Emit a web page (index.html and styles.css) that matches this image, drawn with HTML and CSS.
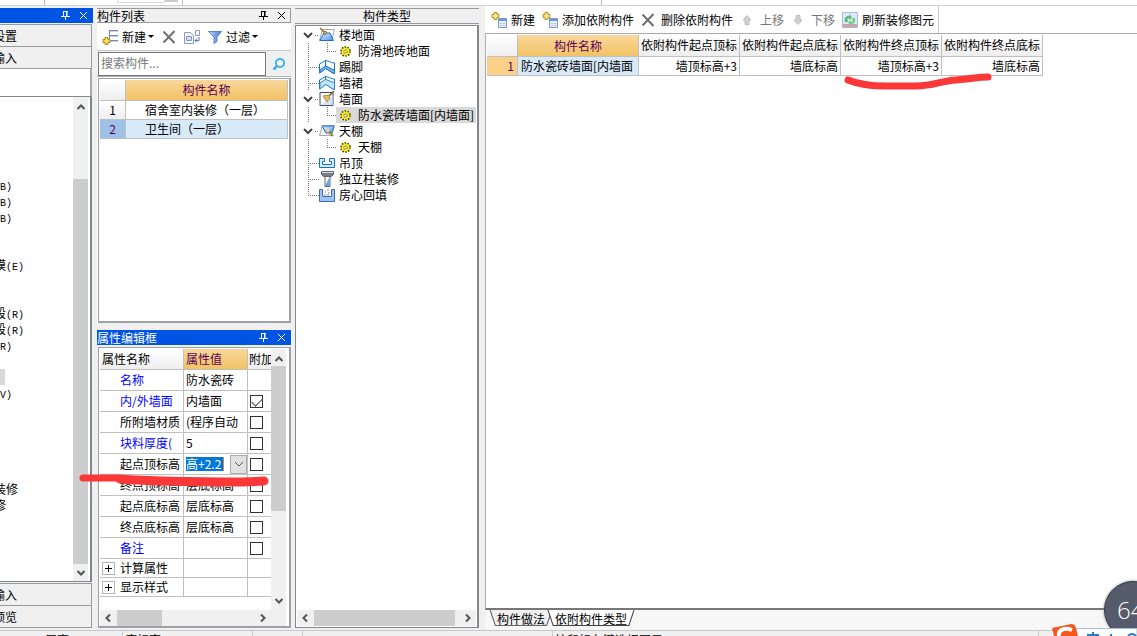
FILE: index.html
```html
<!DOCTYPE html>
<html lang="zh-CN">
<head>
<meta charset="utf-8">
<title>构件列表</title>
<link rel="stylesheet" href="styles.css">
</head>
<body>
<svg class="defs" aria-hidden="true">
  <defs>
    <linearGradient id="gFunnel" x1="0" x2="1"><stop offset="0" stop-color="#c4dafb"/><stop offset="1" stop-color="#3f74d6"/></linearGradient>
    <linearGradient id="gBlue" x1="0" x2="1" y1="0" y2="1"><stop offset="0" stop-color="#d9ecff"/><stop offset="1" stop-color="#4d97ea"/></linearGradient>
  </defs>
  <symbol id="pin" viewBox="0 0 9 9"><path d="M2.5 0v5M2 .5h5M6 0v5M5.500 0v5M0 5.500h9M4.500 6v3" fill="none" stroke="currentColor"/></symbol>
  <symbol id="close" viewBox="0 0 9 9"><path d="M1 1l7 7M8 1l-7 7" fill="none" stroke="currentColor"/></symbol>
  <symbol id="up" viewBox="0 0 10 10"><path d="M1.500 7L5 3.500L8.500 7" fill="none" stroke="#555" stroke-width="2"/></symbol>
  <symbol id="down" viewBox="0 0 10 10"><path d="M1.500 3L5 6.500L8.500 3" fill="none" stroke="#555" stroke-width="2"/></symbol>
  <symbol id="thindown" viewBox="0 0 10 10"><path d="M1 3L5 7L9 3" fill="none" stroke="#555"/></symbol>
  <symbol id="left" viewBox="0 0 10 10"><path d="M7 1.500L3.500 5L7 8.500" fill="none" stroke="#555" stroke-width="2"/></symbol>
  <symbol id="right" viewBox="0 0 10 10"><path d="M3 1.500L6.500 5L3 8.500" fill="none" stroke="#555" stroke-width="2"/></symbol>
  <symbol id="delete" viewBox="0 0 14 14"><path d="M1.500 1.500l11 11.500M12.500 1L1.500 12.500" fill="none" stroke="#707070" stroke-width="2"/></symbol>
  <symbol id="newitem" viewBox="0 0 16 16"><path d="M7 1.500h9M7 6.500h9M7 11.500h9M7.500 1v11" stroke="#7288b0" fill="none"/><path d="M8 2.500h8M8 7.500h8M8 12.500h8" stroke="#c6d3ea" fill="none"/><path d="M3 8.500h3v2h2v3h-2v2h-3v-2h-2v-3h2z" fill="#f6dc5a" stroke="#a98a21"/></symbol>
  <symbol id="newsheet" viewBox="0 0 16 16"><path d="M7.500 6.500h8v9h-8z" fill="#eaf2ff" stroke="#7d97cb"/><path d="M8 7h7v2h-7z" fill="#6f96dd"/><path d="M9 11.500h2M12 11.500h2M9 13.500h2M12 13.500h2" stroke="#a9bfe5"/><path d="M3 .5h3v2h2v3h-2v2h-3v-2h-2v-3h2z" fill="#f6e48a" stroke="#b0922a"/></symbol>
  <symbol id="copy" viewBox="0 0 16 16"><path d="M.5 3.500h6l3 3v8h-9z" fill="#f4f7fc" stroke="#8a9dc2"/><path d="M2.500 7.500h5v4h-5z" fill="#d7deec" stroke="#8797b5"/><path d="M11.500 1.500h4v5h-4z" fill="#f4f7fc" stroke="#8a9dc2"/><path d="M15 8v3.500h-4M13 9.500l-2 2l2 2" fill="none" stroke="#5373cc"/></symbol>
  <symbol id="filter" viewBox="0 0 14 14"><path d="M.5 1.500h13L9 7v4.500l-3 2V7z" fill="url(#gFunnel)" stroke="#5785d2"/></symbol>
  <symbol id="search" viewBox="0 0 14 14"><path d="M0 0h14v14H0z" fill="#e4f4fd"/><circle cx="8" cy="6" r="4" fill="#f6fcff" stroke="#4aa9e6" stroke-width="2"/><path d="M5 9L1.500 12.500" stroke="#4aa9e6" stroke-width="2.500"/></symbol>
  <symbol id="arrowup" viewBox="0 0 10 10"><path d="M5 .5L9 5H7v4.500H3V5H1z" fill="#d0d0d0" stroke="#bdbdbd"/></symbol>
  <symbol id="arrowdown" viewBox="0 0 10 10"><path d="M5 9.500L9 5H7V.5H3V5H1z" fill="#d0d0d0" stroke="#bdbdbd"/></symbol>
  <symbol id="refresh" viewBox="0 0 16 16"><path d="M.5 .5h15v15H.5z" fill="#dde9fb" stroke="#a6bbea"/><path d="M1 12h14v3H1z" fill="#cfa5a2"/><path d="M3 10c-1-4 1-6 4-6V2l3 3.500L7 8V6C5 6 5 8 6 10z" fill="#55ba6a"/><path d="M13 6c1 4-1 6-4 6v1.500L6 10.500L9 8v2c2 0 2-2 1-4z" fill="#6fce80"/></symbol>
  <symbol id="gear" viewBox="0 0 11 11"><circle cx="5.500" cy="5.500" r="5" fill="#f7ee2a"/><circle cx="5.500" cy="5.500" r="4.600" fill="none" stroke="#3a3600" stroke-width="1.500" stroke-dasharray="1.400 1.490"/><circle cx="5.500" cy="5.500" r="1.600" fill="#fff" stroke="#3a3600" stroke-dasharray="1.300 .9"/></symbol>
  <symbol id="floor" viewBox="0 0 16 16"><path d="M3.500 2.500h12l-3 11H.5z" fill="#fff" stroke="#a8a8a8"/><path d="M5 6h6l3.500 7.500H1z" fill="url(#gBlue)" stroke="#1d70c8"/><path d="M1 1l4 4" stroke="#9b6a28" stroke-width="1.500"/><path d="M4 4l4 1l-2 3z" fill="#e6b754" stroke="#a47420"/></symbol>
  <symbol id="skirt" viewBox="0 0 16 16"><path d="M.5 5L6.500 1.500v8L.5 14z M6.500 1.500C10 1.500 11 4 15.500 4v10.500C12 14 10 10.500 6.500 9.500z" fill="#fff" stroke="#1474c8"/><path d="M1 11l5.500-4c4 1 5 3.500 9 4v3.500C12 14 10 10.500 6.500 9.500L1 14z" fill="#79b6ef" stroke="#1474c8"/></symbol>
  <symbol id="dado" viewBox="0 0 16 16"><path d="M.5 5L6.500 1.500v8L.5 14z M6.500 1.500C10 1.500 11 4 15.500 4v10.500C12 14 10 10.500 6.500 9.500z" fill="#fff" stroke="#1474c8"/><path d="M1 8l5.500-3.500c4 1 5 2.500 9 3v7C12 14 10 10.500 6.500 9.500L1 14z" fill="#c7e2fb" stroke="#2f8ada"/></symbol>
  <symbol id="wall" viewBox="0 0 16 16"><path d="M1 1.500h13v13H1z" fill="#fff" stroke="#444b63"/><path d="M2 14L13.500 5v9z" fill="#d3e4fa"/><path d="M9 6l6-6" stroke="#725027" stroke-width="1.500"/><path d="M4 5l6-1l1 3l-3 4z" fill="#e4bd68" stroke="#b08c48"/></symbol>
  <symbol id="ceiling" viewBox="0 0 16 16"><path d="M3.500 2.500h12l-3 10H.5z" fill="#f7f9fd" stroke="#a8a8a8"/><path d="M3 3h12l-2 7H7z" fill="url(#gBlue)" stroke="#2872cf"/><path d="M9 8l5 5" stroke="#ad7a37" stroke-width="2"/><path d="M6 5l5 1l-2 4z" fill="#f1d49b"/></symbol>
  <symbol id="hung" viewBox="0 0 16 12"><path d="M.5 1.500h5v3h-2v3h9v-3h-2v-3h5v9H.5z" fill="#d4eaff" stroke="#1474c8"/></symbol>
  <symbol id="column" viewBox="0 0 16 16"><path d="M2.500 .5h12v3l-2 2h-8l-2-2z" fill="#777e87" stroke="#626870"/><path d="M3 1.500h11" stroke="#d8dde3"/><path d="M6 5.500h5v10H6z" fill="#fff" stroke="#666"/><path d="M6.500 14l4-8v9h-4z" fill="#5fa6ea"/></symbol>
  <symbol id="backfill" viewBox="0 0 16 14"><path d="M.5 1.500h3v7h9v-7h3v12H.5z" fill="#9fc4f0" stroke="#3f6ab3"/><path d="M5 7h2M8 7h2M6 4h1M9 5h2M8 2h2" stroke="#9fb0cc" stroke-width="1.500"/></symbol>
  <symbol id="gOpen" viewBox="0 0 21 16"><path d="M6 6l4 4l4-4" fill="none" stroke="#444" stroke-width="2"/><path d="M17 8.500h4" stroke="#777" stroke-dasharray="1 1"/></symbol>
  <symbol id="gMid" viewBox="0 0 21 16"><path d="M10.500 0v16M10 8.500h11" fill="none" stroke="#777" stroke-dasharray="1 1"/></symbol>
  <symbol id="gEnd" viewBox="0 0 21 16"><path d="M10.500 0v8M10 8.500h11" fill="none" stroke="#777" stroke-dasharray="1 1"/></symbol>
  <symbol id="gChild" viewBox="0 0 38 16"><path d="M10.500 0v16M29.500 0v8M29 8.500h9" fill="none" stroke="#777" stroke-dasharray="1 1"/></symbol>
</svg>

<div class="app">
  <div class="topstrip"><i class="sep s1"></i><i class="combo"></i><i class="combo-btn"></i><i class="sep s2"></i><i class="sep s3"></i></div>

  <main class="main">
    <nav class="modules">
      <div class="title active"><span></span><svg class="i9"><use href="#pin"/></svg><svg class="i9"><use href="#close"/></svg></div>
      <button class="modbtn first">设置</button>
      <button class="modbtn">输入</button>
      <div class="modbar"></div>
      <div class="modtree">
        <ul class="modlist">
          <li></li><li></li><li></li><li></li><li></li>
          <li><kbd>(B)</kbd></li><li><kbd>(B)</kbd></li><li><kbd>(B)</kbd></li><li></li><li></li>
          <li>模<kbd>(E)</kbd></li><li></li><li></li><li>段<kbd>(R)</kbd></li><li>段<kbd>(R)</kbd></li>
          <li><kbd>(R)</kbd></li><li></li><li class="sel"></li><li><kbd>(V)</kbd></li><li></li>
          <li></li><li></li><li></li><li></li><li>装修</li><li>修</li>
        </ul>
        <div class="vbar"><svg class="i10"><use href="#up"/></svg><i class="room"></i><i class="thumb"></i><svg class="i10"><use href="#down"/></svg></div>
      </div>
      <button class="modbtn first">输入</button>
      <button class="modbtn">预览</button>
    </nav>

    <div class="middle">
      <section class="complist">
        <div class="title"><span>构件列表</span><svg class="i9"><use href="#pin"/></svg><svg class="i9"><use href="#close"/></svg></div>
        <div class="tools">
          <button class="tool"><svg class="i16"><use href="#newitem"/></svg>新建<i class="caret"></i></button>
          <button class="tool" aria-label="删除"><svg class="i14"><use href="#delete"/></svg></button>
          <button class="tool" aria-label="复制"><svg class="i16"><use href="#copy"/></svg></button>
          <button class="tool"><svg class="i14"><use href="#filter"/></svg>过滤<i class="caret"></i></button>
        </div>
        <div class="searchrow">
          <input type="text" placeholder="搜索构件..." aria-label="搜索构件">
          <button class="tool" aria-label="搜索"><svg class="i14"><use href="#search"/></svg></button>
        </div>
        <div class="frame listframe">
          <table class="complisttable">
            <colgroup><col class="cnum"><col></colgroup>
            <tr><th class="plain"></th><th class="gold">构件名称</th></tr>
            <tr><th class="plain">1</th><td>宿舍室内装修（一层）</td></tr>
            <tr class="cur"><th>2</th><td>卫生间（一层）</td></tr>
          </table>
        </div>
      </section>

      <section class="props">
        <div class="title active"><span>属性编辑框</span><svg class="i9"><use href="#pin"/></svg><svg class="i9"><use href="#close"/></svg></div>
        <div class="frame propframe">
          <div class="propscroll">
            <table class="proptable">
              <colgroup><col class="cname"><col class="cval"><col></colgroup>
              <tr><th class="plain">属性名称</th><th class="gold">属性值</th><th class="plain">附加</th></tr>
              <tr><td class="key">名称</td><td>防水瓷砖</td><td></td></tr>
              <tr><td class="key">内/外墙面</td><td>内墙面</td><td><input type="checkbox" aria-label="内/外墙面" checked></td></tr>
              <tr><td>所附墙材质</td><td>(程序自动</td><td><input type="checkbox" aria-label="所附墙材质"></td></tr>
              <tr><td class="key">块料厚度(</td><td>5</td><td><input type="checkbox" aria-label="块料厚度"></td></tr>
              <tr><td>起点顶标高</td><td class="editing"><div class="edit"><input type="text" value="高+2.2" aria-label="起点顶标高"><button aria-label="展开"><svg class="i10"><use href="#thindown"/></svg></button></div></td><td><input type="checkbox" aria-label="起点顶标高附加"></td></tr>
              <tr><td>终点顶标高</td><td>层底标高</td><td><input type="checkbox" aria-label="终点顶标高"></td></tr>
              <tr><td>起点底标高</td><td>层底标高</td><td><input type="checkbox" aria-label="起点底标高"></td></tr>
              <tr><td>终点底标高</td><td>层底标高</td><td><input type="checkbox" aria-label="终点底标高"></td></tr>
              <tr><td class="key">备注</td><td></td><td><input type="checkbox" aria-label="备注"></td></tr>
              <tr class="group"><td><div class="grp"><button class="plus" aria-label="展开计算属性"></button>计算属性</div></td><td></td><td></td></tr>
              <tr class="group"><td><div class="grp"><button class="plus" aria-label="展开显示样式"></button>显示样式</div></td><td></td><td></td></tr>
            </table>
          </div>
          <div class="vbar"><svg class="i10"><use href="#up"/></svg><i class="thumb"></i><svg class="i10 tail"><use href="#down"/></svg></div>
          <div class="hbar"><svg class="i10"><use href="#left"/></svg><i class="thumb"></i><svg class="i10 tail"><use href="#right"/></svg></div>
        </div>
      </section>
    </div>

    <section class="types">
      <h2 class="typetitle">构件类型</h2>
      <div class="typeframe">
        <ul class="tree">
          <li><svg class="g21"><use href="#gOpen"/></svg><svg class="i16"><use href="#floor"/></svg><span>楼地面</span></li>
          <li><svg class="g38"><use href="#gChild"/></svg><div class="leaf"><svg class="i11"><use href="#gear"/></svg>防滑地砖地面</div></li>
          <li><svg class="g21"><use href="#gMid"/></svg><svg class="i16"><use href="#skirt"/></svg><span>踢脚</span></li>
          <li><svg class="g21"><use href="#gMid"/></svg><svg class="i16"><use href="#dado"/></svg><span>墙裙</span></li>
          <li><svg class="g21"><use href="#gOpen"/></svg><svg class="i16"><use href="#wall"/></svg><span>墙面</span></li>
          <li><svg class="g38"><use href="#gChild"/></svg><div class="leaf sel"><svg class="i11"><use href="#gear"/></svg>防水瓷砖墙面[内墙面]</div></li>
          <li><svg class="g21"><use href="#gOpen"/></svg><svg class="i16"><use href="#ceiling"/></svg><span>天棚</span></li>
          <li><svg class="g38"><use href="#gChild"/></svg><div class="leaf"><svg class="i11"><use href="#gear"/></svg>天棚</div></li>
          <li><svg class="g21"><use href="#gMid"/></svg><svg class="i16"><use href="#hung"/></svg><span>吊顶</span></li>
          <li><svg class="g21"><use href="#gMid"/></svg><svg class="i16"><use href="#column"/></svg><span>独立柱装修</span></li>
          <li><svg class="g21"><use href="#gEnd"/></svg><svg class="i16"><use href="#backfill"/></svg><span>房心回填</span></li>
        </ul>
        <div class="hbar"><svg class="i10"><use href="#left"/></svg><i class="thumb"></i><svg class="i10"><use href="#right"/></svg></div>
      </div>
    </section>

    <section class="detail">
      <div class="detailbar">
        <div class="toolgroup">
          <button class="tool"><svg class="i16"><use href="#newsheet"/></svg>新建</button>
          <button class="tool"><svg class="i16"><use href="#newsheet"/></svg>添加依附构件</button>
          <button class="tool"><svg class="i14"><use href="#delete"/></svg>删除依附构件</button>
          <button class="tool off"><svg class="i10"><use href="#arrowup"/></svg>上移</button>
          <button class="tool off"><svg class="i10"><use href="#arrowdown"/></svg>下移</button>
          <button class="tool"><svg class="i16"><use href="#refresh"/></svg>刷新装修图元</button>
        </div>
      </div>
      <div class="sheet">
        <table class="sheettable">
          <colgroup><col class="snum"><col class="sname"><col class="sval"><col class="sval"><col class="sval"><col class="sval"></colgroup>
          <tr><th class="plain"></th><th class="gold">构件名称</th><th class="plain">依附构件起点顶标</th><th class="plain">依附构件起点底标</th><th class="plain">依附构件终点顶标</th><th class="plain">依附构件终点底标</th></tr>
          <tr><th class="rownum">1</th><td class="cur">防水瓷砖墙面[内墙面</td><td>墙顶标高+3</td><td>墙底标高</td><td>墙顶标高+3</td><td>墙底标高</td></tr>
        </table>
      </div>
      <div class="tabs">
        <button class="tab"><svg viewBox="0 0 60 16" preserveAspectRatio="none"><path d="M1 0L6 15.500H54L59 0" fill="#f0f0f0" stroke="#666"/></svg><span>构件做法</span></button>
        <button class="tab on"><svg viewBox="0 0 86 16" preserveAspectRatio="none"><path d="M1 0L6 15.500H80L85 0" fill="#fff" stroke="#444"/></svg><span>依附构件类型</span></button>
      </div>
    </section>
  </main>

  <footer class="status"><span class="st1">层高</span><span class="st2">底标高</span><span class="st3"></span><span class="st4"></span><span class="st5">按鼠标左键选择图元</span><span></span></footer>
</div>

<svg class="mark mark-left" viewBox="0 0 194 16" aria-hidden="true"><path d="M5 7h36" /><path class="thick" d="M42 8C80 11 130 11 165 11L186 10"/></svg>
<svg class="mark mark-right" viewBox="0 0 154 20" aria-hidden="true"><path d="M6 8C18 13 30 14 44 14H74C92 14 98 9 114 8S134 5 146 5"/></svg>
<div class="meter">64</div>
<div class="ime"><svg viewBox="0 0 85 12"><path d="M22 4.500h63v8H22z" fill="#fff" stroke="#9fc0de"/><path d="M0 4L19 0q4 0 5 4l2 8H2z" fill="#f4581f"/><path d="M20 6C12 3 6 6 7 12" fill="none" stroke="#fff" stroke-width="4"/><path d="M35 11h12M41 8v4M59 12v-2M76 12q4-4 8 0" fill="none" stroke="#2b78c4" stroke-width="2"/></svg></div>
</body>
</html>
```
FILE: styles.css
```css
* { box-sizing: border-box; }
body {
  margin: 0;
  overflow: hidden;
  background: #f0f0f0;
  color: #000;
  font: 12px/16px "Noto Sans CJK SC", sans-serif;
}
button, input { font: inherit; color: inherit; margin: 0; padding: 0; border: 0; border-radius: 0; background: none; }
svg { display: block; flex: none; }
ul { list-style: none; margin: 0; padding: 0; }
table { border-collapse: separate; border-spacing: 0; table-layout: fixed; }
th, td { padding: 0; font-weight: normal; white-space: nowrap; overflow: hidden; border-right: 1px solid #c0c0c0; border-bottom: 1px solid #c0c0c0; }
.defs { position: absolute; width: 0; height: 0; }
.i9 { width: 9px; height: 9px; }
.i10 { width: 10px; height: 10px; }
.i11 { width: 11px; height: 11px; }
.i14 { width: 14px; height: 14px; }
.i16 { width: 16px; height: 16px; }
.g21 { width: 21px; height: 16px; }
.g38 { width: 38px; height: 16px; }

.app { height: 100vh; display: flex; flex-direction: column; }
.topstrip { display: flex; height: 6px; flex: none; background: #fff; border-bottom: 1px solid #d0d0d0; }
.sep { width: 1px; background: #bbb; }
.s1 { margin-left: 44px; }
.combo { width: 48px; margin-left: 72px; height: 3px; border: 1px solid #ddd; border-top: 0; }
.combo-btn { width: 13px; height: 2px; background: #ccc; }
.s2 { margin-left: 4px; }
.s3 { margin-left: 418px; }

.main { flex: 1; min-height: 0; display: flex; gap: 4px; }
.modules, .middle, .types { flex: none; display: flex; flex-direction: column; padding: 2px 0; }
.title { display: flex; align-items: center; gap: 9px; height: 15px; flex: none; padding-right: 4px; border: 1px solid #999; border-left: 0; background: #f0f0f0; }
.title span { flex: 1; }
.title.active { background: #0054e3; border-color: #0054e3; color: #fff; }

.modules { width: 93px; }
.modbtn { height: 22px; flex: none; text-align: left; text-indent: -7px; overflow: hidden; background: #f0f0f0; border-right: 1px solid #999; border-bottom: 1px solid #999; margin-right: 1px; }
.modbtn.first { height: 23px; margin-top: 1px; border-top: 1px solid #999; }
.modbar { height: 27px; background: #fff; border-right: 2px solid #aaa; flex: none; margin-right: 1px; }
.modtree { flex: 1; min-height: 0; display: flex; background: #fff; border: solid #828790; border-width: 1px 2px 1px 0; margin-right: 1px; padding-right: 2px; }
.modlist { flex: 1; overflow: hidden; }
.modlist li { height: 16px; text-indent: -6px; white-space: nowrap; }
.modlist kbd { font: 10px/16px "Liberation Mono", monospace; }
.modlist .sel { width: 5px; background: #d9d9d9; }
.vbar { width: 15px; display: flex; flex-direction: column; align-items: center; background: #f0f0f0; padding: 5px 0; }
.vbar .room { height: 67px; flex: none; }
.thumb { background: #cdcdcd; }
.vbar .thumb { flex: 1; width: 100%; margin-bottom: 4px; }
.modules .vbar { padding-bottom: 3px; }
.hbar { height: 16px; display: flex; align-items: center; background: #f0f0f0; padding: 0 3px; }
.hbar .thumb { flex: 1; height: 100%; margin: 0 4px; }

.middle { width: 194px; gap: 7px; }
.complist { flex: 0 0 315px; display: flex; flex-direction: column; background: #fff; }
.tools { display: flex; align-items: center; gap: 8px; height: 28px; padding-left: 5px; border-bottom: 1px solid #c8c8c8; flex: none; }
.tool { display: flex; align-items: center; gap: 4px; white-space: nowrap; }
.caret { border: 3px solid transparent; border-top-color: #000; border-bottom: 0; }
.tools .caret { margin-left: -2px; }
.searchrow { display: flex; height: 26px; flex: none; background: #f0f0f0; border-bottom: 1px solid #b0b0b0; }
.searchrow input { flex: 1; min-width: 0; margin: 1px 0 0 1px; height: 24px; padding: 0 2px 4px; background: #fff; border: 1px solid #777; }
.searchrow input::placeholder { color: #777; }
.searchrow .tool { width: 25px; justify-content: center; }
.frame { background: #fff; border: solid #a0a0a8; border-width: 1px 2px 2px 1px; margin-left: 1px; }
.listframe { flex: 1; margin-top: 1px; padding: 1px; }
.complisttable { width: 100%; }
.cnum { width: 26px; }
.complisttable tr { height: 19px; }
.complisttable tr:first-child { height: 21px; }
.complisttable td { padding-left: 19px; }
.plain { background: linear-gradient(#fff, #eee); }
.gold { background: linear-gradient(#f9d79b, #f2c264); color: #5a005a; }
.complisttable .cur th { background: #9fc1e8; color: #5a005a; }
.complisttable .cur td { background: #d8e9f8; }

.props { flex: 1; min-height: 0; display: flex; flex-direction: column; }
.propframe { flex: 1; min-height: 0; margin-top: 2px; padding: 1px 1px 0; display: grid; grid-template-columns: 1fr 17px; grid-template-rows: 1fr 16px; }
.propscroll { overflow: hidden; min-height: 0; }
.propscroll .proptable { width: 172px; }
.cname { width: 84px; }
.cval { width: 64px; }
.proptable tr { height: 21px; }
.proptable .group { height: 19px; }
.proptable th { text-align: left; padding-left: 2px; }
.proptable td { padding-left: 2px; line-height: 18px; }
.proptable td:first-child { padding-left: 20px; }
.proptable td:last-child, .proptable th:last-child { border-right: 0; }
.proptable th:last-child { padding-left: 1px; }
.proptable .group td:first-child { padding-left: 2px; }
.proptable .key { color: #00f; }
.grp { display: flex; align-items: center; gap: 5px; }
.plus { width: 13px; height: 13px; border: 1px solid #b5b5b5; background: linear-gradient(#000, #000) center / 7px 1px no-repeat, linear-gradient(#000, #000) center / 1px 7px no-repeat; }
input[type="checkbox"] { appearance: none; display: block; width: 13px; height: 13px; border: 1px solid #333; background: #fff; }
input[type="checkbox"]:checked::after { content: ""; display: block; width: 9px; height: 5px; margin: 2px 0 0 1px; border: solid #444; border-width: 0 0 1px 1px; transform: rotate(-45deg); }
.edit { display: flex; justify-content: space-between; align-items: center; height: 20px; }
.edit input { width: 38px; height: 14px; line-height: 14px; background: #0078d7; color: #fff; border-right: 1px solid #e08030; }
.edit button { width: 17px; height: 19px; display: flex; align-items: center; justify-content: center; background: #e1e1e1; border: 1px solid #adadad; }
.propframe .vbar { grid-row: 1 / 3; grid-column: 2; padding-bottom: 20px; }
.propframe .vbar .thumb { flex: 0 0 145px; margin: 2px 0 0; }
.vbar .tail { margin-top: auto; }
.propframe .hbar { grid-column: 1; grid-row: 2; }
.propframe .hbar .thumb { flex: 0 0 45px; }
.propframe .hbar .tail { margin-left: auto; }

.types { width: 184px; }
.typetitle { margin: 0; height: 16px; flex: none; font-size: 12px; line-height: 14px; font-weight: normal; text-align: center; border: solid #999; border-width: 1px 0; }
.typeframe { flex: 1; min-height: 0; display: flex; flex-direction: column; margin-top: 1px; background: #fff; border: 1px solid #828790; border-right-width: 2px; padding: 1px; }
.tree { flex: 1; padding: 0 0 0 1px; overflow: hidden; }
.tree li { display: flex; height: 16px; align-items: center; white-space: nowrap; }
.tree span { margin-left: 4px; }
.leaf { flex: 1; min-width: 0; overflow: hidden; height: 16px; display: flex; align-items: center; gap: 7px; padding-left: 4px; }
.leaf.sel { background: #d9d9d9; }
.typeframe .hbar .thumb { margin-right: 8px; }

.detail { flex: 1; min-width: 0; display: flex; flex-direction: column; margin-left: 2px; }
.detailbar { height: 28px; flex: none; background: #fff; border-bottom: 1px solid #aaa; display: flex; }
.toolgroup { display: flex; align-items: center; gap: 7px; padding: 0 4px 0 6px; border-right: 1px solid #c8c8c8; }
.toolgroup .i14 { margin-right: 2px; }
.toolgroup .off { color: #777; gap: 8px; margin-left: 2px; }
.sheet { flex: 1; background: #fff; border-left: 1px solid #aaa; padding: 1px; overflow: hidden; border-bottom: 2px solid #777; }
.sheettable { width: 556px; }
.snum { width: 31px; }
.sname { width: 121px; }
.sval { width: 101px; }
.sheettable tr { height: 19px; }
.sheettable tr:first-child { height: 22px; }
.sheettable th.plain { padding-bottom: 2px; }
.sheettable td { text-align: right; padding-right: 2px; }
.sheettable .cur { background: #d8e9f8; text-align: left; padding-left: 3px; }
.rownum { background: #fdd08a; color: #5a005a; text-align: right; padding-right: 3px; }
.tabs { display: flex; height: 20px; flex: none; padding-left: 4px; background: repeating-conic-gradient(#f0f0f0 0 25%, #fff 0 50%) 0 0 / 2px 2px; }
.tab { position: relative; height: 16px; padding: 0 8px; margin-right: -6px; }
.tab svg { position: absolute; top: 0; left: 0; width: 100%; height: 100%; }
.tab span { position: relative; line-height: 15px; display: block; }

.status { display: flex; height: 6px; flex: none; border-top: 1px solid #c8c8c8; overflow: hidden; line-height: 12px; }
.status span { border-right: 1px solid #ccc; white-space: nowrap; padding: 3px 0 0 2px; }
.status span:last-child { border: 0; }
.st1 { width: 123px; text-indent: 43px; }
.st2 { width: 130px; }
.st3 { width: 50px; }
.st4 { width: 250px; }
.st5 { width: 486px; }

.mark { position: absolute; fill: none; stroke: #fb3737; stroke-linecap: round; stroke-width: 7px; }
.mark .thick { stroke-width: 9px; }
.mark-left { left: 78px; top: 471px; width: 194px; height: 16px; }
.mark-right { left: 842px; top: 72px; width: 154px; height: 20px; }
.meter { position: absolute; right: -25px; bottom: -3px; width: 58px; height: 58px; padding-left: 12px; border-radius: 50%; background: #555b6b; border: 1px solid #3c404c; box-shadow: 0 0 3px #888; color: #fff; font: 300 24px/56px "Open Sans", sans-serif; }
.ime { position: absolute; right: 0; bottom: 0; width: 85px; height: 12px; }
.ime svg { width: 85px; height: 12px; }
```
